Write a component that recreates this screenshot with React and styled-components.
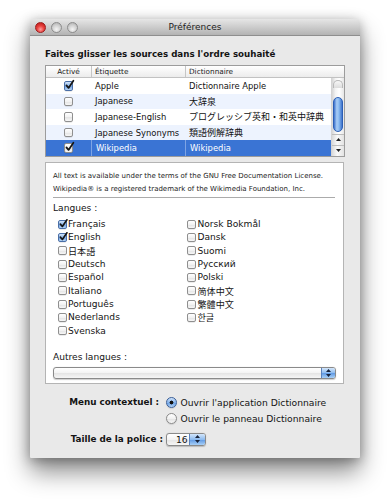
import React from "react";
import styled, { createGlobalStyle } from "styled-components";

const Global = createGlobalStyle`
  html, body { margin: 0; padding: 0; background: #ffffff; }
  body { font-family: "DejaVu Sans", "Noto Sans CJK JP", sans-serif; color: #111; }
`;

const Page = styled.div`
  width: 390px;
  height: 500px;
  box-sizing: border-box;
  padding: 19px 0 0 30px;
  overflow: hidden;
`;

const Window = styled.div`
  width: 330px;
  height: 439px;
  background: #e9e9e9;
  border-radius: 4px 4px 1px 1px;
  box-shadow: 0 14px 24px rgba(0, 0, 0, 0.45), 0 2px 12px rgba(0, 0, 0, 0.3);
  display: flex;
  flex-direction: column;
`;

const TitleBar = styled.div`
  height: 16px;
  border-bottom: 1px solid #8e8e8e;
  border-radius: 4px 4px 0 0;
  background: linear-gradient(#e6e6e6, #b3b3b3);
  display: grid;
  grid-template-columns: 1fr auto 1fr;
  align-items: center;
  padding: 0 5px;
`;

const Lights = styled.div`
  display: flex;
  gap: 5px;
`;

const Light = styled.span`
  width: 11px;
  height: 11px;
  border-radius: 50%;
  box-sizing: border-box;
  border: 1px solid ${(p) => (p.$red ? "#9b1d1d" : "#8d8d8d")};
  background: ${(p) =>
    p.$red
      ? "radial-gradient(circle at 50% 70%, #ff9d9d 0%, #e8403c 45%, #b51614 100%)"
      : "radial-gradient(circle at 50% 70%, #f4f4f4 0%, #d2d2d2 50%, #a9a9a9 100%)"};
`;

const Title = styled.div`
  font-size: 9px;
  color: #1e1e1e;
`;

const Content = styled.div`
  padding: 0 15px;
  display: flex;
  flex-direction: column;
`;

const Heading = styled.div`
  margin-top: 11px;
  font-size: 8.7px;
  font-weight: bold;
  line-height: 14px;
  color: #141414;
`;

const Table = styled.div`
  margin-top: 4px;
  border: 1px solid #9c9c9c;
  background: #fff;
  display: flex;
  flex-direction: column;
`;

const cols = "45px 94px 1fr";

const HeaderRow = styled.div`
  display: grid;
  grid-template-columns: ${cols};
  height: 11px;
  border-bottom: 1px solid #c2c2c2;
  background: linear-gradient(#ffffff, #ececec);
`;

const HeadCell = styled.div`
  font-size: 7.3px;
  line-height: 11px;
  color: #222;
  padding-left: ${(p) => (p.$center ? 0 : 3)}px;
  text-align: ${(p) => (p.$center ? "center" : "left")};
  border-left: ${(p) => (p.$first ? "none" : "1px solid #c6c6c6")};
`;

const TableBody = styled.div`
  display: flex;
`;

const Rows = styled.div`
  flex: 1;
  display: flex;
  flex-direction: column;
`;

const Row = styled.div`
  display: grid;
  grid-template-columns: ${cols};
  height: 15.6px;
  align-items: stretch;
  background: ${(p) => (p.$selected ? "#3a74d4" : p.$alt ? "#edf3fe" : "#ffffff")};
  color: ${(p) => (p.$selected ? "#ffffff" : "#111")};
`;

const Cell = styled.div`
  display: flex;
  align-items: center;
  justify-content: ${(p) => (p.$center ? "center" : "flex-start")};
  padding-left: ${(p) => (p.$center ? 0 : 4)}px;
  font-size: ${(p) => (p.$cjk ? 9 : 8.4)}px;
  white-space: nowrap;
  overflow: hidden;
  border-left: ${(p) => (p.$line ? `1px solid ${p.$line}` : "none")};
`;

const Scrollbar = styled.div`
  width: 12px;
  display: flex;
  flex-direction: column;
  border-left: 1px solid #d4d4d4;
  background: linear-gradient(90deg, #d6d6d6, #f4f4f4 30%, #ffffff 60%, #e6e6e6);
`;

const Track = styled.div`
  flex: 1;
  display: flex;
  flex-direction: column;
  align-items: center;
`;

const TopCap = styled.div`
  width: 10px;
  height: 8px;
  margin-top: 2px;
  border: 1px solid #b9b9b9;
  border-bottom: none;
  border-radius: 6px 6px 0 0;
  background: linear-gradient(#f7f7f7, #dcdcdc);
  box-sizing: border-box;
`;

const Thumb = styled.div`
  width: 10px;
  height: 35px;
  margin-top: 9px;
  box-sizing: border-box;
  border: 1px solid #2c5fb6;
  border-radius: 5px;
  background: linear-gradient(90deg, #3d72cc, #a9cdf6 35%, #8cbcf1 60%, #3f74cd);
`;

const ArrowBtn = styled.div`
  height: 10px;
  display: flex;
  align-items: center;
  justify-content: center;
  border-top: 1px solid #bdbdbd;
  background: linear-gradient(90deg, #dadada, #fafafa 45%, #e2e2e2);
`;

const Panel = styled.div`
  margin-top: 5px;
  width: 299px;
  height: 222px;
  box-sizing: border-box;
  background: #ffffff;
  border: 1px solid #b4b4b4;
  padding: 7px 8px 0 7px;
  display: flex;
  flex-direction: column;
`;

const Legal = styled.div`
  font-size: 7px;
  line-height: 12.7px;
  color: #1c1c1c;
  white-space: nowrap;
`;

const Divider = styled.div`
  height: 1px;
  margin-top: 1.5px;
  background: #ababab;
`;

const Label = styled.div`
  margin-top: ${(p) => p.$mt || 0}px;
  font-size: 9.1px;
  line-height: 13px;
  color: #141414;
`;

const LangGrid = styled.div`
  margin-top: 2.5px;
  padding-left: 4.5px;
  display: grid;
  grid-auto-flow: column;
  grid-template-rows: repeat(9, 13.33px);
  grid-template-columns: 129.5px auto;
`;

const LangItem = styled.label`
  display: flex;
  align-items: center;
  gap: 1.5px;
  font-size: 9.1px;
  color: #141414;
  white-space: nowrap;
`;

const Box = styled.span`
  position: relative;
  flex: none;
  width: ${(p) => p.$size}px;
  height: ${(p) => p.$size}px;
  box-sizing: border-box;
  border-radius: 2px;
  border: 1px solid ${(p) => (p.$blue ? "#4a6fa8" : "#8f8f8f")};
  background: ${(p) =>
    p.$blue
      ? "linear-gradient(#d2e4fa, #8ab5ea 50%, #6d9fe2 51%, #b7d5f6)"
      : "linear-gradient(#ffffff, #f2f2f2 50%, #e3e3e3 51%, #f7f7f7)"};
  box-shadow: 0 0.5px 0.5px rgba(0, 0, 0, 0.15);
`;

const Tick = styled.svg`
  position: absolute;
  left: 0.5px;
  top: -2px;
  width: ${(p) => p.$size}px;
  height: ${(p) => p.$size}px;
  overflow: visible;
`;

const Checkbox = ({ on, size = 9, blue }) => (
  <Box $size={size} $blue={blue}>
    {on && (
      <Tick $size={size} viewBox="0 0 12 12">
        <path
          d="M1.8 6.8 L4.5 10 L10.6 1"
          fill="none"
          stroke="#151515"
          strokeWidth="2.2"
          strokeLinecap="round"
          strokeLinejoin="round"
        />
      </Tick>
    )}
  </Box>
);

const Popup = styled.div`
  margin-top: ${(p) => p.$mt || 0}px;
  width: ${(p) => p.$width};
  height: ${(p) => p.$height}px;
  box-sizing: border-box;
  border: 1px solid #8a8a8a;
  border-radius: 3px;
  background: linear-gradient(#ffffff, #f3f3f3 50%, #e4e4e4 51%, #f6f6f6);
  display: flex;
  align-items: stretch;
  overflow: hidden;
  box-shadow: 0 0.5px 1px rgba(0, 0, 0, 0.2);
`;

const PopupText = styled.div`
  flex: 1;
  display: flex;
  align-items: center;
  padding-left: ${(p) => p.$pad || 0}px;
  font-size: 9.2px;
  color: #111;
`;

const Stepper = styled.div`
  width: ${(p) => p.$w}px;
  display: flex;
  align-items: center;
  justify-content: center;
  border-left: 1px solid #5a82bd;
  background: linear-gradient(#d3e6fb, #8dbbef 50%, #5d97e3 51%, #a8d0f7);
`;

const StepArrows = () => (
  <svg width="5" height="8" viewBox="0 0 5 8">
    <path d="M2.5 0 L5 3 L0 3 Z M0 5 L5 5 L2.5 8 Z" fill="#18233a" />
  </svg>
);

const Form = styled.div`
  margin-top: 10.5px;
  display: grid;
  grid-template-columns: 118px auto;
  column-gap: 3px;
  align-items: center;
`;

const FormLabel = styled.div`
  text-align: right;
  font-size: 8.8px;
  font-weight: bold;
  color: #141414;
  padding-right: ${(p) => p.$inset || 0}px;
  line-height: 15px;
  margin-top: ${(p) => p.$mt || 0}px;
  white-space: nowrap;
`;

const RadioRow = styled.label`
  display: flex;
  align-items: center;
  gap: 3.5px;
  height: 15.7px;
  font-size: 9.2px;
  color: #141414;
  white-space: nowrap;
`;

const Radio = styled.span`
  flex: none;
  width: 11px;
  height: 11px;
  box-sizing: border-box;
  border-radius: 50%;
  border: 1px solid ${(p) => (p.$on ? "#3a5f98" : "#8a8a8a")};
  background: ${(p) =>
    p.$on
      ? "radial-gradient(circle, #111 0 1.7px, transparent 2.2px), linear-gradient(#cfe2fa, #86b4ec 50%, #659de3 51%, #b4d4f7)"
      : "linear-gradient(#ffffff, #f1f1f1 50%, #e1e1e1 51%, #f7f7f7)"};
  box-shadow: 0 0.5px 1px rgba(0, 0, 0, 0.2);
`;

const Slot = styled.div`
  margin-top: ${(p) => p.$mt || 0}px;
`;

const dictRows = [
  { on: true, label: "Apple", dict: "Dictionnaire Apple" },
  { on: false, label: "Japanese", dict: "大辞泉", cjk: true },
  { on: false, label: "Japanese-English", dict: "プログレッシブ英和・和英中辞典", cjk: true },
  { on: false, label: "Japanese Synonyms", dict: "類語例解辞典", cjk: true },
  { on: true, label: "Wikipedia", dict: "Wikipedia", selected: true },
];

const langs = [
  { name: "Français", on: true },
  { name: "English", on: true },
  { name: "日本語" },
  { name: "Deutsch" },
  { name: "Español" },
  { name: "Italiano" },
  { name: "Português" },
  { name: "Nederlands" },
  { name: "Svenska" },
  { name: "Norsk Bokmål" },
  { name: "Dansk" },
  { name: "Suomi" },
  { name: "Русский" },
  { name: "Polski" },
  { name: "简体中文" },
  { name: "繁體中文" },
  { name: "한글" },
];

export default function App() {
  return (
    <Page>
      <Global />
      <Window>
        <TitleBar>
          <Lights>
            <Light $red />
            <Light />
            <Light />
          </Lights>
          <Title>Préférences</Title>
          <span />
        </TitleBar>
        <Content>
          <Heading>Faites glisser les sources dans l'ordre souhaité</Heading>
          <Table>
            <HeaderRow>
              <HeadCell $first $center>Activé</HeadCell>
              <HeadCell>Étiquette</HeadCell>
              <HeadCell>Dictionnaire</HeadCell>
            </HeaderRow>
            <TableBody>
              <Rows>
                {dictRows.map((r, i) => (
                  <Row key={r.label} $alt={i % 2 === 1} $selected={r.selected}>
                    <Cell $center>
                      <Checkbox on={r.on} size={9.5} blue={r.on && !r.selected} />
                    </Cell>
                    <Cell $line={r.selected ? "#7ea4e4" : null}>{r.label}</Cell>
                    <Cell $line={r.selected ? "#7ea4e4" : null} $cjk={r.cjk}>
                      {r.dict}
                    </Cell>
                  </Row>
                ))}
              </Rows>
              <Scrollbar>
                <Track>
                  <TopCap />
                  <Thumb />
                </Track>
                <ArrowBtn>
                  <svg width="5" height="3" viewBox="0 0 5 3">
                    <path d="M2.5 0 L5 3 L0 3 Z" fill="#222" />
                  </svg>
                </ArrowBtn>
                <ArrowBtn>
                  <svg width="5" height="3" viewBox="0 0 5 3">
                    <path d="M0 0 L5 0 L2.5 3 Z" fill="#222" />
                  </svg>
                </ArrowBtn>
              </Scrollbar>
            </TableBody>
          </Table>

          <Panel>
            <Legal>
              All text is available under the terms of the GNU Free Documentation License.
              <br />
              Wikipedia® is a registered trademark of the Wikimedia Foundation, Inc.
            </Legal>
            <Divider />
            <Label $mt={4}>Langues :</Label>
            <LangGrid>
              {langs.map((l) => (
                <LangItem key={l.name}>
                  <Checkbox on={l.on} size={9} blue={l.on} />
                  {l.name}
                </LangItem>
              ))}
            </LangGrid>
            <Label $mt={14}>Autres langues :</Label>
            <Popup $mt={2.5} $width="283px" $height={12}>
              <PopupText />
              <Stepper $w={13}>
                <StepArrows />
              </Stepper>
            </Popup>
          </Panel>

          <Form>
            <FormLabel $inset={4}>Menu contextuel :</FormLabel>
            <RadioRow>
              <Radio $on />
              Ouvrir l'application Dictionnaire
            </RadioRow>
            <span />
            <RadioRow>
              <Radio />
              Ouvrir le panneau Dictionnaire
            </RadioRow>
            <FormLabel $mt={6}>Taille de la police :</FormLabel>
            <Slot $mt={6}>
              <Popup $width="40px" $height={13.5}>
                <PopupText $pad={9}>16</PopupText>
                <Stepper $w={15}>
                  <StepArrows />
                </Stepper>
              </Popup>
            </Slot>
          </Form>
        </Content>
      </Window>
    </Page>
  );
}
